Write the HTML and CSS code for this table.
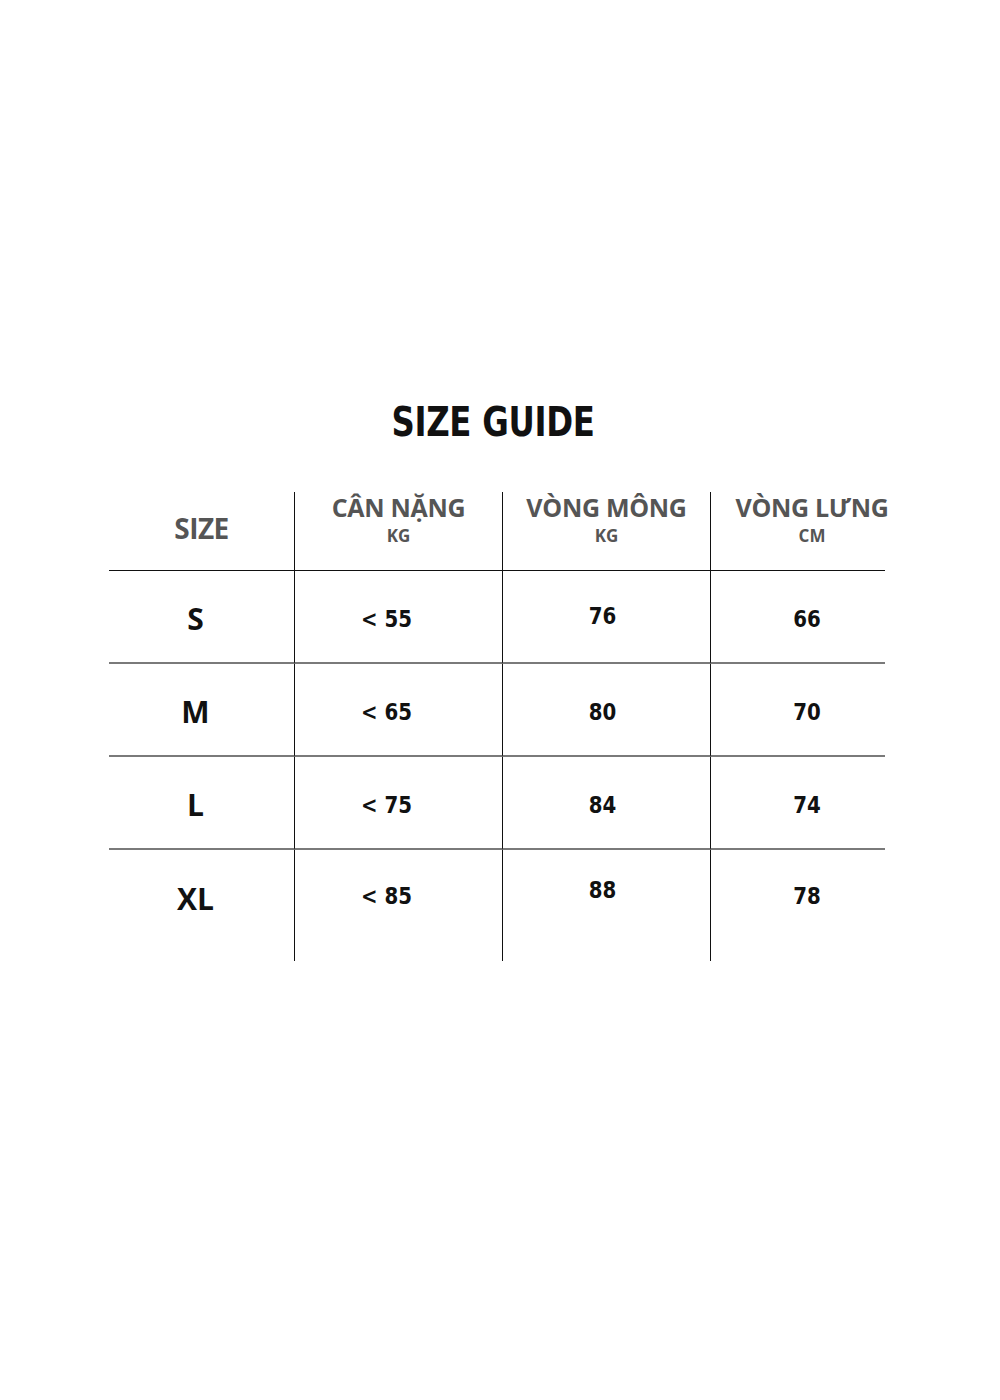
FILE: index.html
```html
<!DOCTYPE html>
<html lang="vi">
<head>
<meta charset="utf-8">
<title>Size Guide</title>
<link rel="stylesheet" href="styles.css">
</head>
<body>
<main class="page">
  <h1 class="title">SIZE GUIDE</h1>
  <div class="table">
    <div class="cell head c1"><span class="h-main h-size">SIZE</span></div>
    <div class="cell head c2"><span class="h-main">CÂN NẶNG</span><span class="h-sub">KG</span></div>
    <div class="cell head c3"><span class="h-main">VÒNG MÔNG</span><span class="h-sub">KG</span></div>
    <div class="cell head c4"><span class="h-main">VÒNG LƯNG</span><span class="h-sub">CM</span></div>

    <div class="cell row first c1"><span class="size">S</span></div>
    <div class="cell row first c2"><span class="num">&lt; 55</span></div>
    <div class="cell row first c3"><span class="num up">76</span></div>
    <div class="cell row first c4"><span class="num">66</span></div>

    <div class="cell row c1"><span class="size">M</span></div>
    <div class="cell row c2"><span class="num">&lt; 65</span></div>
    <div class="cell row c3"><span class="num">80</span></div>
    <div class="cell row c4"><span class="num">70</span></div>

    <div class="cell row c1"><span class="size">L</span></div>
    <div class="cell row c2"><span class="num">&lt; 75</span></div>
    <div class="cell row c3"><span class="num">84</span></div>
    <div class="cell row c4"><span class="num">74</span></div>

    <div class="cell row last c1"><span class="size">XL</span></div>
    <div class="cell row last c2"><span class="num">&lt; 85</span></div>
    <div class="cell row last c3"><span class="num up">88</span></div>
    <div class="cell row last c4"><span class="num">78</span></div>
  </div>
</main>
</body>
</html>
```
FILE: styles.css
```css
html, body {
  margin: 0;
  padding: 0;
  background: #ffffff;
}
.page {
  width: 1000px;
  height: 1400px;
  padding-top: 400px;
  box-sizing: border-box;
}
.title {
  margin: 0;
  height: 88px;
  padding-top: 4px;
  text-align: center;
  font-family: "DejaVu Sans Condensed", "DejaVu Sans", sans-serif;
  font-weight: bold;
  font-size: 36px;
  line-height: 42px;
  color: #111;
  padding-right: 14px;
  letter-spacing: -0.3px;
  transform: scaleY(1.14);
}
.table {
  margin-left: 109px;
  width: 776px;
  display: grid;
  grid-template-columns: 185px 208px 208px 175px;
}
.cell {
  display: flex;
  flex-direction: column;
  align-items: center;
  box-sizing: border-box;
}
.c2, .c3, .c4 {
  border-left: 1px solid #111;
}
.head {
  height: 79px;
  border-bottom: 1.5px solid #111;
  justify-content: flex-start;
}
.h-main {
  font-family: "Open Sans", sans-serif;
  font-weight: bold;
  font-size: 25px;
  line-height: 30px;
  color: #555555;
  white-space: nowrap;
  letter-spacing: -0.3px;
}
.h-size {
  font-size: 28px;
  letter-spacing: -0.5px;
}
.h-sub {
  margin-top: 3px;
  font-family: "Open Sans", sans-serif;
  font-weight: bold;
  font-size: 17px;
  line-height: 22px;
  color: #555555;
}
.head.c1 {
  padding-top: 21px;
}
.head.c4 {
  padding-left: 28px;
}
.row {
  height: 93px;
  border-bottom: 2px solid #7a7a7a;
  justify-content: center;
  padding-top: 5px;
}
.row.last {
  height: 111px;
  border-bottom: none;
  justify-content: flex-start;
  padding-top: 32px;
}
.row.c1 { padding-right: 12px; }
.row.c2 { padding-right: 24px; }
.row.c3 { padding-right: 8px; }
.row.c4 { padding-left: 18px; }
.size {
  font-family: "Open Sans", sans-serif;
  font-weight: bold;
  font-size: 30px;
  line-height: 34px;
  color: #111;
}
.num {
  font-family: "DejaVu Sans Condensed", "DejaVu Sans", sans-serif;
  font-weight: bold;
  font-size: 22px;
  line-height: 28px;
  color: #111;
  transform: scaleY(1.08);
}
.num.up {
  margin-top: -6px;
}
```
